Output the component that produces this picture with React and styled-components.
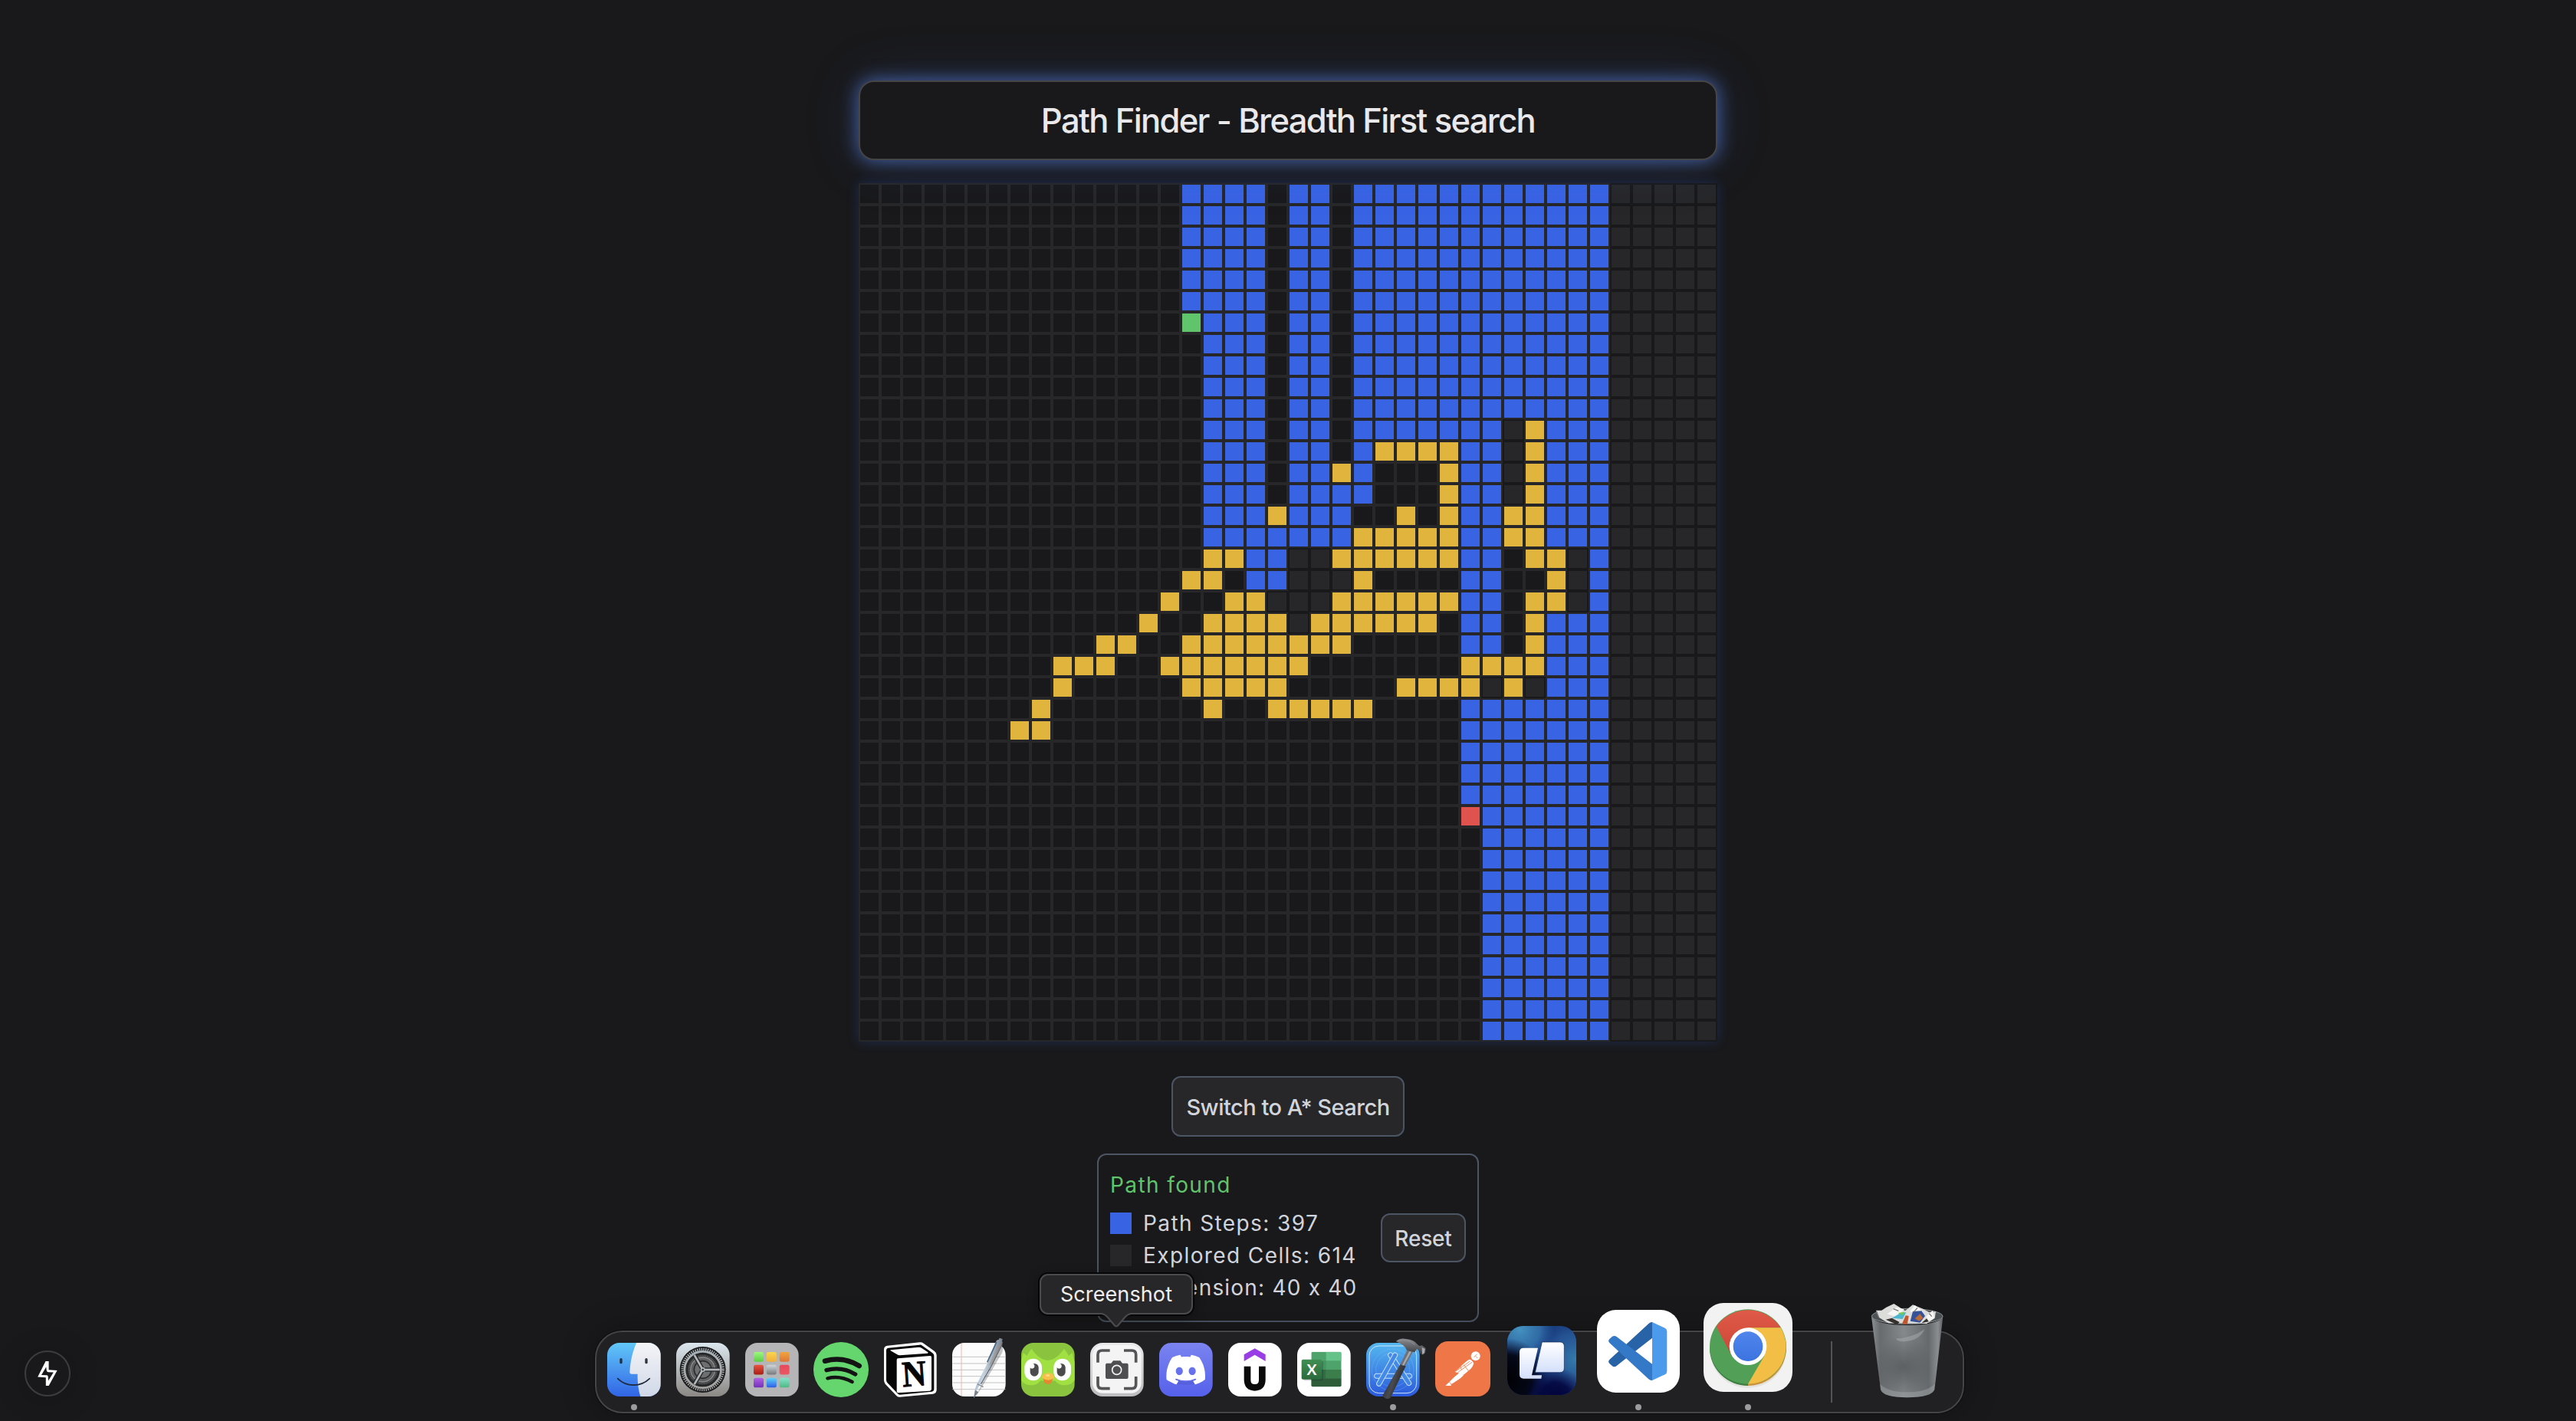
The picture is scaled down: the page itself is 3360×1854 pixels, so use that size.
import React from "react";
import styled, { createGlobalStyle } from "styled-components";
import { SiDiscord } from "react-icons/si";

const GlobalStyle = createGlobalStyle`
  * { box-sizing: border-box; }
  html, body { margin: 0; padding: 0; background: #19191b; }
  body { overflow: hidden; font-family: Inter, "Liberation Sans", sans-serif; color: #d1d5db; }
`;

const Page = styled.main`
  position: relative;
  display: flex;
  flex-direction: column;
  align-items: center;
  width: 3360px;
  height: 1854px;
  padding-top: 105px;
  overflow: hidden;
  background: #19191b;
`;

const Title = styled.h1`
  position: relative;
  z-index: 1;
  display: flex;
  align-items: center;
  justify-content: center;
  width: 1120px;
  height: 104px;
  margin: 0 0 30px;
  padding-top: 2px;
  border: 2px solid #454446;
  border-radius: 20px;
  background: #19191b;
  box-shadow: 0 0 24px rgba(90, 135, 240, 0.7), 0 0 80px rgba(70, 110, 220, 0.14);
  color: #e9e9ec;
  font-size: 43.5px;
  font-weight: 500;
  letter-spacing: -1.65px;
  line-height: 1;
  white-space: nowrap;
`;

const Board = styled.div`
  display: grid;
  grid-template-columns: repeat(40, 28px);
  grid-auto-rows: 28px;
  box-shadow: 0 0 14px rgba(45, 85, 190, 0.32);
`;

const cellColors = {
  ".": "#19191b",
  E: "#272729",
  B: "#3863e3",
  Y: "#e1b43e",
  S: "#5fc46c",
  T: "#e0524e",
};

const Cell = styled.div`
  border: 2px solid ${(p) => (p.$kind === "E" ? "#19191b" : "#272729")};
  background: ${(p) => cellColors[p.$kind]};
`;

const Button = styled.button`
  display: flex;
  align-items: center;
  justify-content: center;
  flex: none;
  width: ${(p) => p.$w}px;
  height: ${(p) => p.$h}px;
  padding: 1px 0 0;
  margin-top: ${(p) => p.$top ?? 0}px;
  border: 2px solid #4b5563;
  border-radius: 12px;
  background: #272729;
  color: #d1d5db;
  font-family: inherit;
  font-size: ${(p) => p.$size}px;
  font-weight: 500;
  letter-spacing: ${(p) => p.$track}px;
  white-space: nowrap;
`;

const Panel = styled.section`
  display: flex;
  align-items: center;
  justify-content: space-between;
  width: 498px;
  height: 220px;
  margin-top: 22px;
  padding: 0 15px;
  border: 2px solid #4b5563;
  border-radius: 12px;
`;

const Stats = styled.div`
  display: flex;
  flex-direction: column;
  padding-bottom: 4px;
  font-size: 28px;
  letter-spacing: 1.4px;
  white-space: nowrap;
`;

const Status = styled.div`
  height: 42px;
  margin-bottom: 8px;
  line-height: 42px;
  color: #5fc46c;
`;

const Stat = styled.div`
  display: flex;
  align-items: center;
  gap: 15px;
  height: 42px;
  letter-spacing: ${(p) => p.$track ?? 1.4}px;
`;

const Swatch = styled.span`
  width: 28px;
  height: 28px;
  background: ${(p) => p.$color};
`;

const DevBadge = styled.div`
  position: absolute;
  left: 32px;
  top: 1762px;
  display: flex;
  align-items: center;
  justify-content: center;
  width: 60px;
  height: 60px;
  border: 2px solid #3d3d3f;
  border-radius: 50%;
  background: #19191b;
  box-shadow: 0 4px 40px rgba(0, 0, 0, 0.2);
`;

const Dock = styled.nav`
  position: absolute;
  left: 776px;
  top: 1736px;
  display: flex;
  align-items: flex-end;
  width: 1786px;
  height: 108px;
  padding-left: 14px;
  border: 2px solid #454547;
  border-radius: 36px;
  background: #212123;
  box-shadow: 0 0 0 1px #0c0c0d, 0 0 44px rgba(0, 0, 0, 0.3);
`;

const DockItem = styled.div`
  position: relative;
  display: flex;
  flex: none;
  margin-left: ${(p) => p.$gap}px;
  margin-bottom: ${(p) => p.$lift}px;
  svg { display: block; overflow: visible; }
`;

const RunningDot = styled.span`
  position: absolute;
  left: calc(50% - 4.5px);
  bottom: ${(p) => 2 - p.$lift}px;
  width: 8px;
  height: 8px;
  border-radius: 50%;
  background: #9c9c9f;
`;

const Separator = styled.span`
  flex: none;
  width: 2px;
  height: 80px;
  margin: 0 0 12px 50px;
  background: #545457;
`;

const Tooltip = styled.div`
  position: absolute;
  left: 1356px;
  top: 1662px;
  display: flex;
  align-items: center;
  justify-content: center;
  width: 200px;
  height: 53px;
  border: 2px solid #4b4b4d;
  border-radius: 11px;
  background: #272729;
  box-shadow: 0 0 0 2px #060607, 0 4px 16px rgba(0, 0, 0, 0.4);
  color: #eeeeef;
  font-size: 27px;
  letter-spacing: 0.1px;
`;

const TooltipArrow = styled.svg`
  position: absolute;
  left: 80px;
  top: 48px;
  overflow: visible;
`;

const runs = (spec) => {
  const row = Array(40).fill(".");
  for (let c = 35; c < 40; c++) row[c] = "E";
  spec.split(" ").forEach((part) => {
    const [a, b] = part.slice(1).split("-").map(Number);
    for (let c = a; c <= (b ?? a); c++) row[c] = part[0];
  });
  return row;
};

const rows = [
  ...Array(6).fill("B15-18 B20-21 B23-34"),
  "S15 B16-18 B20-21 B23-34",
  ...Array(4).fill("B16-18 B20-21 B23-34"),
  "B16-18 B20-21 B23-29 E30 Y31 B32-34",
  "B16-18 B20-21 B23 Y24-27 B28-29 E30 Y31 B32-34",
  "B16-18 B20-21 Y22 B23 Y27 B28-29 E30 Y31 B32-34",
  "B16-18 B20-23 Y27 B28-29 E30 Y31 B32-34",
  "B16-18 Y19 B20-22 Y25 Y27 B28-29 Y30-31 B32-34",
  "B16-22 Y23-27 B28-29 Y30-31 B32-34",
  "Y16-17 B18-19 E20-21 Y22-27 B28-29 Y31-32 E33 B34",
  "Y15-16 B18-19 E20-22 Y23 B28-29 Y32 E33 B34",
  "Y14 Y17-18 E19-21 Y22-27 B28-29 Y31-32 E33 B34",
  "Y13 Y16-19 E20 Y21-26 B28-29 Y31 B32-34",
  "Y11-12 Y15-22 B28-29 Y31 B32-34",
  "Y9-11 Y14-20 Y28-31 B32-34",
  "Y9 Y15-19 Y25-28 E29 Y30 E31 B32-34",
  "Y8 Y16 Y19-23 B28-34",
  "Y7-8 B28-34",
  ...Array(3).fill("B28-34"),
  "T28 B29-34",
  ...Array(10).fill("B29-34"),
].map(runs);

const Grad = ({ id, from, to }) => (
  <linearGradient id={id} x1="0" y1="0" x2="0" y2="1">
    <stop offset="0" stopColor={from} />
    <stop offset="1" stopColor={to} />
  </linearGradient>
);

const Tile = ({ fill = "#fff" }) => <rect width="209" height="210" rx="48" fill={fill} />;

const Art = ({ w = 70, h = w, box = `0 0 ${w * 3} ${h * 3}`, children }) => (
  <svg width={w} height={h} viewBox={box}>{children}</svg>
);

const Finder = () => (
  <Art>
    <defs>
      <Grad id="fBlue" from="#62c8f8" to="#3164e6" />
      <Grad id="fFace" from="#f4f4f6" to="#d0d8e8" />
      <clipPath id="fClip"><rect width="209" height="210" rx="48" /></clipPath>
    </defs>
    <g clipPath="url(#fClip)">
      <rect width="210" height="210" fill="url(#fBlue)" />
      <path d="M114 0C98 38 90 76 88 114q0 8 8 8h23c-1 30 2 60 11 88h90V0z" fill="url(#fFace)" />
    </g>
    <rect x="49" y="60" width="10" height="22" rx="5" fill="#22303f" />
    <rect x="148" y="60" width="10" height="22" rx="5" fill="#30353c" />
    <path d="M41 140c34 34 90 34 125 0" fill="none" stroke="#1d2a3c" strokeWidth="5" strokeLinecap="round" />
  </Art>
);

const Settings = () => (
  <Art>
    <defs>
      <Grad id="sBg" from="#dbe7ee" to="#8b8884" />
      <Grad id="sRing" from="#a9b2b8" to="#a4a3a1" />
    </defs>
    <Tile fill="url(#sBg)" />
    <circle cx="104" cy="105" r="90" fill="#1b1c1d" />
    <circle cx="104" cy="105" r="79" fill="none" stroke="url(#sRing)" strokeWidth="11" strokeDasharray="4.1 4.17" />
    <circle cx="104" cy="105" r="71" fill="none" stroke="url(#sRing)" strokeWidth="8" />
    <circle cx="104" cy="105" r="64" fill="#2c2d2e" />
    <circle cx="104" cy="105" r="54" fill="none" stroke="#77797b" strokeWidth="5" strokeDasharray="3 2.6" />
    <circle cx="104" cy="105" r="48" fill="#5f6162" stroke="#8d8f90" strokeWidth="4" />
    <circle cx="104" cy="105" r="34" fill="#6d6f70" stroke="#2c2d2e" strokeWidth="5" />
    {[0, 120, 240].map((a) => (
      <g key={a} transform={`rotate(${a} 104 105)`}>
        <path d="M108 105h62" stroke="#242526" strokeWidth="16" />
        <path d="M104 105h66" stroke="#b1b7bb" strokeWidth="8" />
      </g>
    ))}
    <circle cx="104" cy="105" r="9" fill="#b1b7bb" />
    <circle cx="104" cy="105" r="4" fill="#333" />
  </Art>
);

const padColors = [
  ["#9cf87e", "#5ccf43"], ["#f9d650", "#f0ae3b"], ["#f0a53c", "#dd7638"],
  ["#ea5240", "#a81f14"], ["#cfd6da", "#77797b"], ["#e8485c", "#ea5964"],
  ["#b262e6", "#7330b8"], ["#5fd4fa", "#2c5ce6"], ["#86e2cb", "#50b884"],
];
const Launchpad = () => (
  <Art>
    <defs>{padColors.map(([a, b], i) => <Grad key={i} id={`lp${i}`} from={a} to={b} />)}</defs>
    <Tile fill="#b5b5b7" />
    {padColors.map((_, i) => (
      <rect key={i} x={33 + (i % 3) * 50.5} y={36 + Math.floor(i / 3) * 50.5} width="39" height="38" rx="8" fill={`url(#lp${i})`} />
    ))}
  </Art>
);

const Spotify = () => (
  <Art w={72}>
    <circle cx="108" cy="108" r="108" fill="#65d56e" />
    <g fill="none" stroke="#131413" strokeLinecap="round">
      <path d="M45 74c44-12 93-6 134 19" strokeWidth="20" />
      <path d="M51 110c38-10 78-5 113 16" strokeWidth="16" />
      <path d="M55 142c32-8 66-3 97 14" strokeWidth="13" />
    </g>
  </Art>
);

const Notion = () => (
  <Art w={69} h={72}>
    <path d="M14 14L140 1q8-1 15 4l42 30q9 6 9 16v136q0 14-14 16L62 215q-9 1-14-6L5 164q-5-7-5-14V29q0-13 14-15z" fill="#fff" />
    <path d="M18 23l121-12q6-1 11 3l39 28q7 5 7 12v130q0 9-9 10L62 206q-5 0-9-5L13 159q-4-5-4-11V33q0-9 9-10z" fill="#060606" />
    <path d="M27 31l109-11q6 0 11 3l25 17q3 3-2 4L62 52q-6 0-10-3L26 34q-3-3 1-3z" fill="#fff" />
    <path d="M55 64l126-10q5 0 5 5v125q0 6-6 7L56 199q-6 0-6-6V70q0-6 5-6z" fill="#fff" />
    <text x="118" y="172" textAnchor="middle" transform="rotate(-4 117 125)" fontFamily="'Liberation Serif', serif" fontWeight="700" fontSize="142" textLength="94" lengthAdjust="spacingAndGlyphs" fill="#060606" stroke="#060606" strokeWidth="3">N</text>
  </Art>
);

const TextEdit = () => (
  <Art>
    <defs>
      <linearGradient id="pen" x1="0" y1="0" x2="1" y2="0.4">
        <stop offset="0" stopColor="#7fa3c4" />
        <stop offset="0.5" stopColor="#c6d2de" />
        <stop offset="1" stopColor="#59636d" />
      </linearGradient>
    </defs>
    <Tile fill="#fcfcfc" />
    <path d="M36 3v204" stroke="#f2b8b4" strokeWidth="3" />
    {[55, 81, 106, 131, 156, 182].map((y) => <path key={y} d={`M1 ${y}h207`} stroke="#c3c3c5" strokeWidth="3" />)}
    <path d="M90 214l24-48 88-168-6 40-80 136z" fill="#000" opacity="0.22" />
    <path d="M84 217l5-34q3-12 8-22l43-86 32-82q4-6 10-5l3-7 12 4-2 9q4 4 1 10l-44 84-42 72q-5 11-12 21z" fill="url(#pen)" />
    <path d="M84 217l6-32 13 8z" fill="#77818b" />
    <path d="M98 161l24 12" stroke="#848c94" strokeWidth="4" />
    <path d="M174-4l-37 80" stroke="#466887" strokeWidth="5" />
    <path d="M189 6l-42 80" stroke="#b08e72" strokeWidth="3" />
    <path d="M196 6l-46 90-38 66" stroke="#5b6570" strokeWidth="4" fill="none" />
  </Art>
);

const Duolingo = () => (
  <Art>
    <defs><clipPath id="dClip"><rect width="209" height="210" rx="48" /></clipPath></defs>
    <g clipPath="url(#dClip)">
      <rect width="210" height="210" fill="#8ac43e" />
      <path d="M-4 82q8-20 12-44l14 13q8-16 18-28c16 22 34 42 64 46 30-4 48-24 64-46q10 12 18 28l14-13q4 24 12 44v60q-14 24-44 24-22 0-36-18l-28 4-28-4q-14 18-36 18-30 0-44-24z" fill="#a0e043" />
    </g>
    <rect x="13" y="62" width="68" height="86" rx="34" fill="#fff" />
    <rect x="127" y="62" width="68" height="86" rx="34" fill="#fff" />
    <rect x="35" y="81" width="33" height="50" rx="16" fill="#4b4b4b" />
    <rect x="140" y="81" width="33" height="50" rx="16" fill="#4b4b4b" />
    <circle cx="42" cy="91" r="10" fill="#fff" />
    <circle cx="148" cy="91" r="10" fill="#fff" />
    <path d="M86 134h37v8q-2 20-18 20t-19-20z" fill="#e5872f" />
    <path d="M81 136q2-18 24-18t24 18q-10 10-24 10t-24-10z" fill="#f7c14b" />
    <ellipse cx="104" cy="128" rx="8" ry="4" fill="#fadf7c" />
  </Art>
);

const Screenshot = () => (
  <Art>
    <defs><Grad id="ssBg" from="#e9e9ea" to="#bcbcbd" /></defs>
    <Tile fill="url(#ssBg)" />
    <rect x="9" y="9" width="191" height="188" rx="40" fill="#f4f4f5" />
    <g fill="none" stroke="#555557" strokeWidth="11">
      <path d="M30 77V46q0-16 16-16h31M132 30h31q16 0 16 16v31M179 132v31q0 16-16 16h-31M77 179H46q-16 0-16-16v-31" />
    </g>
    <path d="M66 80h16l8-10h28l8 10h17q6 0 6 6v49q0 6-6 6H66q-6 0-6-6V86q0-6 6-6z" fill="#4f4f51" />
    <circle cx="104" cy="106" r="18" fill="#4f4f51" stroke="#f4f4f5" strokeWidth="5" />
  </Art>
);

const Discord = () => (
  <Art>
    <defs><Grad id="dcBg" from="#7b84ef" to="#5561eb" /></defs>
    <Tile fill="url(#dcBg)" />
    <ellipse cx="104" cy="150" rx="66" ry="14" fill="#3a42b0" opacity="0.25" />
    <SiDiscord x="28" y="29" size={152} color="#fff" />
    <path d="M66 142q38 16 76 0" fill="none" stroke="#6a73ee" strokeWidth="4" strokeLinecap="round" />
  </Art>
);

const Udemy = () => (
  <Art>
    <Tile />
    <path d="M62 46l42-24 42 24v26l-42-25-42 25z" fill="#993ee6" />
    <path d="M75 92v53q0 30 29 30t29-30V92" fill="none" stroke="#0a0a0a" strokeWidth="26" />
  </Art>
);

const Excel = () => (
  <Art>
    <defs>
      <clipPath id="xClip"><rect x="55" y="35" width="118" height="137" rx="6" /></clipPath>
      <Grad id="xBadge" from="#408f54" to="#2b6a3b" />
    </defs>
    <Tile />
    <g clipPath="url(#xClip)">
      <rect x="55" y="35" width="118" height="137" fill="#4ea26b" />
      <rect x="113" y="35" width="60" height="35" fill="#65c288" />
      <rect x="55" y="70" width="58" height="35" fill="#459560" />
      <rect x="55" y="105" width="58" height="34" fill="#316c42" />
      <rect x="113" y="105" width="60" height="34" fill="#3b7d4b" />
      <rect x="55" y="139" width="118" height="34" fill="#2d5d39" />
    </g>
    <rect x="24" y="72" width="78" height="76" rx="6" fill="#123" opacity="0.22" />
    <rect x="17" y="65" width="79" height="78" rx="6" fill="url(#xBadge)" />
    <text x="57" y="125" textAnchor="middle" fontFamily="Lato, sans-serif" fontWeight="700" fontSize="58" fill="#fff">X</text>
  </Art>
);

const Xcode = () => (
  <Art>
    <defs>
      <Grad id="xcBg" from="#55b8ef" to="#2b59dc" />
      <linearGradient id="xcHandle" x1="0" y1="0" x2="1" y2="0.5">
        <stop offset="0" stopColor="#17181a" />
        <stop offset="0.55" stopColor="#494b50" />
        <stop offset="1" stopColor="#1a1b1d" />
      </linearGradient>
      <Grad id="xcHead" from="#8a8c91" to="#333539" />
    </defs>
    <Tile fill="url(#xcBg)" />
    <rect x="12" y="12" width="185" height="185" rx="38" fill="none" stroke="#cfe6fb" strokeWidth="3" />
    <circle cx="104" cy="106" r="82" fill="none" stroke="#8cc4f4" strokeWidth="1.5" opacity="0.6" />
    <circle cx="104" cy="106" r="66" fill="none" stroke="#8cc4f4" strokeWidth="1.5" opacity="0.6" />
    <g strokeLinecap="round" fill="none">
      {["M41 130h128", "M95 48l72 110", "M113 48L50 160"].map((d) => (
        <g key={d}>
          <path d={d} stroke="#c6e2fb" strokeWidth="21" />
          <path d={d} stroke="#4489e8" strokeWidth="15" />
        </g>
      ))}
    </g>
    <path d="M163 22l22 9-33 62-19-7z" fill="#6f7176" />
    <path d="M172 26l8 3-34 62-6-2z" fill="#a6a8ac" />
    <path d="M133 84q10 6 22 7L96 214q-6 8-18 4-14-5-13-13z" fill="url(#xcHandle)" />
    <path d="M116-6q18-14 40-9 32 2 45 22l8 6 9-3 15 11-1 18-9 10-13-8-2-12-10-5-8 12q-14 2-32-8-6-20-42-34z" fill="url(#xcHead)" />
    <path d="M122-7q40-10 68 14" fill="none" stroke="#8e9095" strokeWidth="3" />
    <path d="M218 18l12 6-2 16-9 6z" fill="#a9abb0" />
  </Art>
);

const Postman = () => (
  <Art w={72}>
    <rect width="216" height="216" rx="50" fill="#ee7647" />
    <circle cx="158" cy="58" r="18" fill="#fff" />
    <path d="M131 72q9-4 20 14-4 14-12 22l-26 22q-12 4-18-5l-18-5 20-18q12-14 34-30z" fill="#fff" />
    <path d="M94 124l18 8q-12 14-30 24l-22 14 4 4H40l16-16q18-18 38-34z" fill="#fff" />
    <path d="M80 118l56-40M88 122l56-40M112 92l18 24M152 62l12-12M158 58l8 8M54 158l10 10M98 98l6 14" stroke="#ee7647" strokeWidth="2.5" fill="none" />
  </Art>
);

const Windows = () => (
  <Art w={90}>
    <defs>
      <radialGradient id="wTL" cx="0.18" cy="0.05" r="0.5"><stop offset="0" stopColor="#4592c0" /><stop offset="0.6" stopColor="#3676ae" stopOpacity="0.8" /><stop offset="1" stopColor="#2b5ca2" stopOpacity="0" /></radialGradient>
      <radialGradient id="wR" cx="1" cy="0.48" r="0.7"><stop offset="0" stopColor="#357dac" /><stop offset="0.55" stopColor="#2a5b9b" stopOpacity="0.7" /><stop offset="1" stopColor="#163a7a" stopOpacity="0" /></radialGradient>
      <radialGradient id="wL" cx="0" cy="0.78" r="0.6"><stop offset="0" stopColor="#010104" /><stop offset="0.6" stopColor="#02020c" stopOpacity="0.9" /><stop offset="1" stopColor="#02022c" stopOpacity="0" /></radialGradient>
      <radialGradient id="wB" cx="0.7" cy="1.05" r="0.45"><stop offset="0" stopColor="#02023a" /><stop offset="0.5" stopColor="#02023a" stopOpacity="0.85" /><stop offset="1" stopColor="#060640" stopOpacity="0" /></radialGradient>
      <Grad id="wCard" from="#ffffff" to="#d3dffa" />
    </defs>
    <rect width="270" height="270" rx="62" fill="#173a7c" />
    {["wR", "wTL", "wL", "wB"].map((g) => <rect key={g} width="270" height="270" rx="62" fill={`url(#${g})`} />)}
    <path d="M64 86h56L96 193h39l-2 13H64q-16 0-16-16v-88q0-16 16-16z" fill="url(#wCard)" />
    <path d="M136 63h70q17 0 17 17v85q0 17-17 17h-97z" fill="url(#wCard)" stroke="#0c2452" strokeWidth="2" />
  </Art>
);

const VSCode = () => (
  <Art w={108}>
    <rect width="324" height="324" rx="74" fill="#fff" />
    <path d="M216 110L78 218q-10 8-18 2l-11-10q-7-8 0-15L203 53q6-6 14-5z" fill="#2763a6" />
    <path d="M49 129q-7-8 0-15l11-10q8-5 17 1l139 107v64q-8 1-14-5z" fill="#3478c8" />
    <path d="M216 48l50 23q8 4 8 14v155q0 9-8 13l-50 23z" fill="#4b9aeb" />
  </Art>
);

const Chrome = () => (
  <Art w={116}>
    <defs>
      <Grad id="cRed" from="#e05a4a" to="#cc4535" />
      <Grad id="cBlue" from="#5085ec" to="#3b73e0" />
    </defs>
    <rect width="348" height="348" rx="78" fill="#f2f2f3" />
    <ellipse cx="174" cy="194" rx="146" ry="138" fill="#9a9a80" opacity="0.18" />
    <path d="M24 176a150 148 0 0 0 150 148V176z" fill="#3c7f41" />
    <path d="M324 176a150 148 0 0 1-150 148V176z" fill="#cf9237" />
    <ellipse cx="174" cy="171" rx="150" ry="146" fill="#52a057" />
    <path d="M50 92A150 146 0 0 1 302 97H174l-64 110z" fill="url(#cRed)" />
    <path d="M302 97A150 146 0 0 1 174 317l64-110L174 97z" fill="#f2be46" />
    <circle cx="174" cy="170" r="73" fill="#fff" />
    <circle cx="174" cy="170" r="58" fill="url(#cBlue)" />
  </Art>
);

const Trash = () => (
  <Art w={94} h={123} box="0 0 282 369">
    <defs>
      <linearGradient id="tBody" x1="0" x2="1" y1="0" y2="0">
        <stop offset="0" stopColor="#8b9093" /><stop offset="0.12" stopColor="#676b6e" />
        <stop offset="0.45" stopColor="#85898b" /><stop offset="0.8" stopColor="#66696b" />
        <stop offset="0.93" stopColor="#8a8e91" /><stop offset="1" stopColor="#5c6063" />
      </linearGradient>
      <radialGradient id="tShade" cx="0.45" cy="0.62" r="0.4"><stop offset="0" stopColor="#3c3f41" stopOpacity="0.55" /><stop offset="1" stopColor="#3c3f41" stopOpacity="0" /></radialGradient>
    </defs>
    <ellipse cx="140" cy="49" rx="139" ry="30" fill="#4d5255" stroke="#8e9396" strokeWidth="3" />
    <path d="M18 26l12 28 36 22 150 2 32-22 4-26-26 4-24-14-40-16-30 24-44-28-30 14-18 12z" fill="#dcdcda" />
    <path d="M62 40l36-26 30 8-30 30zM150 30l20-24 34 26-20 12zM214 50l26-24 6 30-20 12z" fill="#f6f6f4" />
    <path d="M80 56l34-20 22-2-14 26z" fill="#4fb6cf" />
    <path d="M104 36l26-4-8 14z" fill="#72c84c" />
    <path d="M120 78l14-32 12 2-6 34z" fill="#c2562c" />
    <path d="M152 68l10-38 34-2 14 20-20 26z" fill="#36539a" />
    <path d="M170 58l20-18 12 16-16 12z" fill="#bc6b36" />
    <path d="M56 62l24-6 30 16-10 10zM196 76l20-18 8 12z" fill="#34302d" />
    <path d="M20 30l8 22M86 20l20 8M180 16l-14 16M226 38l10 12" stroke="#77797a" strokeWidth="4" />
    <path d="M0 50q20 33 140 34Q262 83 280 50l-33 286q-10 30-107 31Q44 366 36 336z" fill="url(#tBody)" />
    <path d="M0 50q20 33 140 34Q262 83 280 50l-33 286q-10 30-107 31Q44 366 36 336z" fill="url(#tShade)" />
    <path d="M96 136q60 0 112-36-20 46-82 48-26 0-30-12z" fill="#a9adaf" opacity="0.5" />
    <path d="M34 314q30 32 106 32t108-32l-3 22q-10 30-105 31-94-1-104-31z" fill="#a3a8ab" opacity="0.45" />
  </Art>
);

const dockApps = [
  { id: "finder", Icon: Finder, gap: 0, lift: 20, running: true },
  { id: "settings", Icon: Settings, gap: 20, lift: 20 },
  { id: "launchpad", Icon: Launchpad, gap: 20, lift: 20 },
  { id: "spotify", Icon: Spotify, gap: 19, lift: 19 },
  { id: "notion", Icon: Notion, gap: 20, lift: 19 },
  { id: "textedit", Icon: TextEdit, gap: 20, lift: 20 },
  { id: "duolingo", Icon: Duolingo, gap: 20, lift: 20 },
  { id: "screenshot", Icon: Screenshot, gap: 20, lift: 20 },
  { id: "discord", Icon: Discord, gap: 20, lift: 20 },
  { id: "udemy", Icon: Udemy, gap: 20, lift: 20 },
  { id: "excel", Icon: Excel, gap: 20, lift: 20 },
  { id: "xcode", Icon: Xcode, gap: 20, lift: 20, running: true },
  { id: "postman", Icon: Postman, gap: 20, lift: 20 },
  { id: "windows", Icon: Windows, gap: 22, lift: 22 },
  { id: "vscode", Icon: VSCode, gap: 27, lift: 25, running: true },
  { id: "chrome", Icon: Chrome, gap: 31, lift: 26, running: true },
];

export default function App() {
  return (
    <Page>
      <GlobalStyle />
      <Title>Path Finder - Breadth First search</Title>
      <Board>
        {rows.map((row, r) => row.map((kind, c) => <Cell key={`${r}-${c}`} $kind={kind} />))}
      </Board>
      <Button $w={304} $h={79} $top={45} $size={29} $track={-0.5}>
        Switch to A* Search
      </Button>
      <Panel>
        <Stats>
          <Status>Path found</Status>
          <Stat><Swatch $color="#3863e3" />Path Steps: 397</Stat>
          <Stat><Swatch $color="#272729" />Explored Cells: 614</Stat>
          <Stat $track={1.2}><Swatch $color="#19191b" />Dimension: 40 x 40</Stat>
        </Stats>
        <Button $w={111} $h={64} $size={28} $track={-0.2}>Reset</Button>
      </Panel>

      <DevBadge>
        <svg width="44" height="48" viewBox="0 0 44 48">
          <path fillRule="evenodd" fill="#fff" d="M19.5 8H23.6V19.2L34.6 20L23.6 40H19.8V29.2L9.2 28.6ZM20.2 15.5L14 26L21 26.3Q22.6 26.5 22.7 28L23 33.5L29.8 22.6L22.8 22.2Q20.8 22 20.7 20Z" />
        </svg>
      </DevBadge>

      <Dock>
        {dockApps.map(({ id, Icon, gap, lift, running }) => (
          <DockItem key={id} $gap={gap} $lift={lift}>
            <Icon />
            {running && <RunningDot $lift={lift} />}
          </DockItem>
        ))}
        <Separator />
        <DockItem $gap={51} $lift={18}><Trash /></DockItem>
      </Dock>

      <Tooltip>
        Screenshot
        <TooltipArrow width="40" height="20" viewBox="0 0 40 20">
          <path d="M0 0H36V3Q32 3 29 7L20 18Q18 20 16 18L7 7Q4 3 0 3Z" fill="#272729" />
          <path d="M-1 2Q4 3 7 7L16 17.5Q18 19.5 20 17.5L29 7Q32 3 37 2" fill="none" stroke="#4b4b4d" strokeWidth="2" />
        </TooltipArrow>
      </Tooltip>
    </Page>
  );
}
